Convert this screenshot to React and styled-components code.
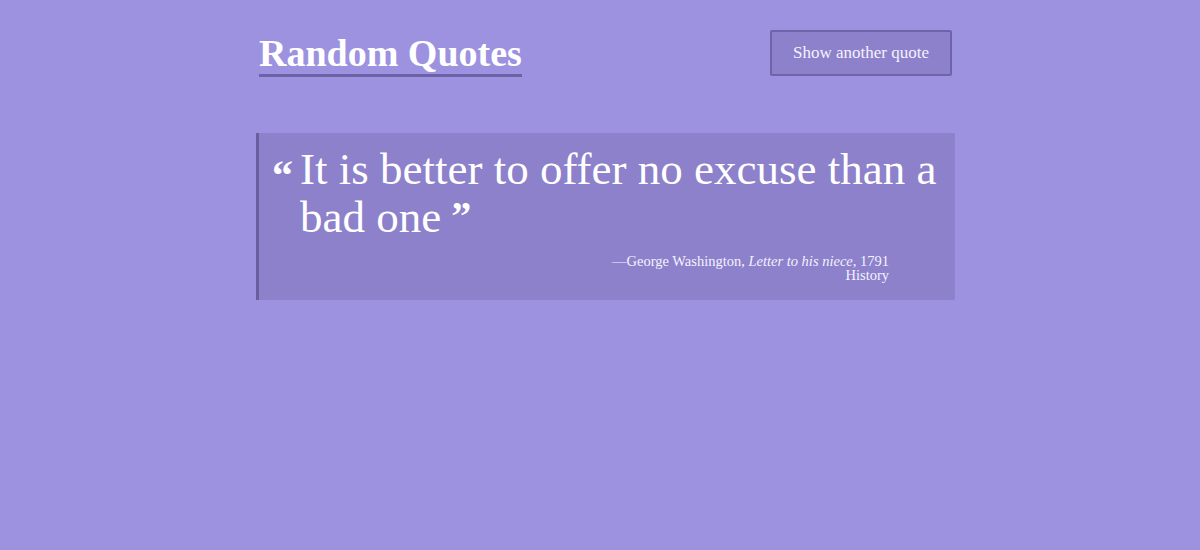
import React from 'react';
import styled, { createGlobalStyle } from 'styled-components';

const GlobalStyle = createGlobalStyle`
  html, body {
    margin: 0;
    padding: 0;
    background: #9d92e0;
  }
  body {
    font-family: "Liberation Serif", "Times New Roman", serif;
    color: #ffffff;
    min-height: 550px;
  }
`;

const Page = styled.div`
  padding: 30px 245px 0 256px;
`;

const Header = styled.header`
  display: flex;
  align-items: flex-start;
  justify-content: space-between;
  padding-left: 3px;
  padding-right: 3px;
`;

const Title = styled.h1`
  margin: 0;
  font-size: 38px;
  font-weight: 700;
  line-height: 42px;
  color: #ffffff;
  border-bottom: 3px solid #6d62a8;
  padding-top: 2px;
`;

const Button = styled.button`
  width: 182px;
  height: 46px;
  background: #8c81ca;
  border: 2px solid #6f64aa;
  border-radius: 2px;
  color: #f4f2ff;
  font-family: inherit;
  font-size: 17px;
  cursor: pointer;
`;

const Quote = styled.blockquote`
  margin: 56px 0 0 0;
  background: #8c81ca;
  border-left: 3px solid #6a5f9e;
  border-radius: 0 2px 2px 0;
  padding: 12px 8px 18px 13px;
`;

const QuoteRow = styled.div`
  display: flex;
  align-items: flex-start;
`;

const Mark = styled.span`
  font-size: 42px;
  font-weight: 700;
  line-height: 40px;
  width: 28px;
  flex: none;
  padding-top: 10px;
`;

const Text = styled.p`
  margin: 0;
  font-size: 45px;
  line-height: 48px;
  color: #ffffff;
`;

const CloseMark = styled.span`
  display: inline-block;
  font-size: 40px;
  font-weight: 700;
  line-height: 30px;
  vertical-align: 3px;
  margin-left: 10px;
`;

const Footer = styled.footer`
  text-align: right;
  font-size: 14.5px;
  line-height: 14px;
  padding-right: 58px;
  margin-top: 13px;
  color: #f4f2ff;
`;

export default function App() {
  return (
    <>
      <GlobalStyle />
      <Page>
        <Header>
          <Title>Random Quotes</Title>
          <Button>Show another quote</Button>
        </Header>
        <Quote>
          <QuoteRow>
            <Mark>“</Mark>
            <Text>
              It is better to offer no excuse than a bad one
              <CloseMark>”</CloseMark>
            </Text>
          </QuoteRow>
          <Footer>
            —George Washington, <i>Letter to his niece</i>, 1791
            <br />
            History
          </Footer>
        </Quote>
      </Page>
    </>
  );
}
